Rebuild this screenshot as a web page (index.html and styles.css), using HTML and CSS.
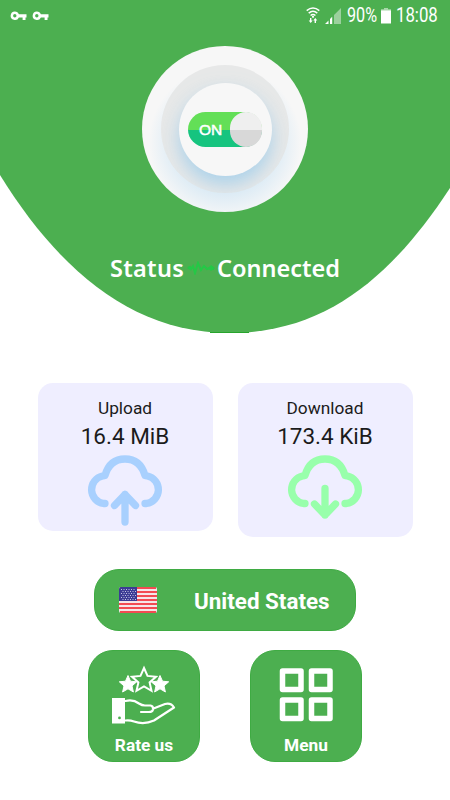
FILE: index.html
```html
<!DOCTYPE html>
<html lang="en">
<head>
<meta charset="UTF-8">
<meta name="viewport" content="width=device-width, initial-scale=1.0">
<title>VPN</title>
<link rel="stylesheet" href="styles.css">
</head>
<body>

<svg class="symbols" width="0" height="0">
  <symbol id="key" viewBox="0 0 16 10">
    <path fill="#fff" fill-rule="evenodd" d="M4.3 .4a4.3 4.3 0 0 1 4.1 2.9H16V6.400H15V9h-2.900V6.400H8.400A4.300 4.300 0 1 1 4.300 .4zM4.300 3a1.700 1.700 0 1 0 0 3.400a1.700 1.700 0 0 0 0-3.400z"/>
  </symbol>
  <symbol id="cloud" viewBox="0 0 76 72">
    <path d="M18 48.500H16.500A14 14 0 0 1 15.500 21Q17 20.500 18 20.500C21 10 28 4 38 4S55 10 58 20.500Q59 20.500 60.500 21A14 14 0 0 1 59.500 48.500H58"/>
  </symbol>
</svg>

<!-- Green top part -->
<div class="hero">
  <svg class="heroShape" viewBox="0 0 450 334" width="450" height="334">
    <path fill="#4caf50" d="M0 0H450V188C395 272 329 333 229.500 333C130 333 57 267 0 175Z"/>
    <path fill="#27a52c" d="M210 332h39v1h-39z"/>
  </svg>

  <div class="statusBar">
    <div class="keys">
      <svg width="17" height="10"><use href="#key"/></svg>
      <svg width="17" height="10"><use href="#key"/></svg>
    </div>
    <div class="system">
      <svg width="14" height="17" viewBox="0 0 14 17">
        <g fill="none" stroke="#fff" stroke-width="1.500">
          <path d="M.7 3.600Q7-1.700 13.300 3.600"/>
          <path d="M2.700 6.100Q7 2.500 11.300 6.100"/>
          <path d="M4.600 8.500Q7 6.500 9.400 8.500"/>
        </g>
        <circle cx="7" cy="9.800" r="1.100" fill="#fff"/>
        <path fill="#fff" d="M4 11h1.400v2.500h1.300L4.700 16L2.700 13.500H4zM8.600 16H10v-2.500h1.300L9.300 11L7.300 13.500h1.300z"/>
      </svg>
      <svg class="signal" width="16" height="16" viewBox="0 0 16 16">
        <path fill="#fff" d="M0 16l3.500-3.500V16zM5 16v-5l2.200-2.200V16z"/>
        <path fill="#9bd09d" d="M9 16V7l1-1V16zM10 16V6l6-6V16z"/>
      </svg>
      <span class="percent">90%</span>
      <svg class="battery" width="10" height="16" viewBox="0 0 10 16">
        <path fill="#a8d7aa" d="M3 0h4v1.300h3V3H0V1.300h3z"/>
        <path fill="#fff" d="M0 2.500h10V15.500H0z"/>
      </svg>
      <span class="time">18:08</span>
    </div>
  </div>

  <div class="power">
    <div class="ring">
      <div class="disc">
        <div class="switch">
          <span>ON</span>
          <div class="knob"></div>
        </div>
      </div>
    </div>
  </div>

  <div class="status">
    <span class="statusLabel">Status</span>
    <svg class="pulse" width="28" height="14" viewBox="0 0 28 14">
      <path fill="none" stroke="#24c846" stroke-width="2" d="M1 7l2-1l1 2l2-3l2 7l3-10l3 7l3-4l3 3l3-1l4 1"/>
      <path fill="#24c846" d="M0 7l3-2v4zM21 7l3-3l4 3l-4 3z"/>
    </svg>
    <span class="statusValue">Connected</span>
  </div>
</div>

<!-- Traffic cards -->
<div class="traffic">
  <div class="card upload">
    <div class="cardTitle">Upload</div>
    <div class="cardValue">16.4 MiB</div>
    <svg width="76" height="72" viewBox="0 0 76 72">
      <use href="#cloud"/>
      <path d="M38 67V39.500M27.500 50.500L38 39.500L48.500 50.500"/>
    </svg>
  </div>
  <div class="card download">
    <div class="cardTitle">Download</div>
    <div class="cardValue">173.4 KiB</div>
    <svg width="76" height="72" viewBox="0 0 76 72">
      <use href="#cloud"/>
      <path d="M38 33.500V60M27.500 49L38 60L48.500 49"/>
    </svg>
  </div>
</div>

<div class="country">
  <svg class="flag" width="38" height="26" viewBox="0 0 38 26">
    <rect width="38" height="26" rx="2" fill="#f5e6e8"/>
    <path stroke="#f34b52" stroke-width="2" d="M1 1H37M0 5H38M0 9H38M0 13H38M0 17H38M0 21H38M1 25H37"/>
    <path fill="#3b3b94" d="M2 0H18V14H0V2Q0 0 2 0z"/>
    <path stroke="#c3c3e2" stroke-width="1" stroke-dasharray="1 1.500" d="M2 2.500H17M3.500 4.500H17M2 6.500H17M3.500 8.500H17M2 10.500H17M3.500 12.500H17"/>
  </svg>
  <span>United States</span>
</div>

<!-- Bottom buttons -->
<div class="tiles">
  <div class="tile">
    <svg width="66" height="60" viewBox="0 0 66 60">
      <path fill="#fff" stroke="#fff" stroke-linejoin="round" d="M17 10.500l2.500 5.700l6.200.6l-4.700 4.100l1.400 6.100l-5.400-3.200l-5.400 3.200l1.400-6.100l-4.700-4.100l6.200-.6zM49 10.500l2.500 5.700l6.200.6l-4.700 4.100l1.400 6.100l-5.400-3.200l-5.400 3.200l1.400-6.100l-4.700-4.100l6.200-.6z"/>
      <path fill="#4caf50" stroke="#fff" stroke-width="2" stroke-linejoin="miter" d="M33 3l3.500 7.900l8.500.8l-6.400 5.700l1.900 8.400l-7.500-4.400l-7.500 4.400l1.900-8.400l-6.400-5.700l8.500-.8z"/>
      <path fill="#fff" fill-rule="evenodd" d="M1 33h13v25.500H1zM8.500 51.500a1.400 1.400 0 1 0 0 2.800a1.400 1.400 0 0 0 0-2.800z"/>
      <path fill="none" stroke="#fff" stroke-width="2.200" stroke-linecap="round" stroke-linejoin="round" d="M14.500 36Q22 34 28 38.500Q31 40.500 34 40.500H39.500Q42.500 41 42 44.500Q41.500 47 38 47H30M42.500 43.500L54 39Q60 37.500 63 42.500L43 55.500Q33 60 23 56.500Q19 55 14.500 55.500"/>
    </svg>
    <span>Rate us</span>
  </div>
  <div class="tile">
    <svg width="54" height="54" viewBox="0 0 54 54">
      <g fill="none" stroke="#fff" stroke-width="5.500" stroke-linejoin="round">
        <path d="M3.500 3h18.500v18.500H3.500zM32.500 3h18.500v18.500H32.500zM3.500 32h18.500v18.500H3.500zM32.500 32h18.500v18.500H32.500z"/>
      </g>
    </svg>
    <span>Menu</span>
  </div>
</div>

</body>
</html>
```
FILE: styles.css
```css
body {
  margin: 0;
  width: 450px;
  height: 800px;
  overflow: hidden;
  background-color: #fff;
  font-family: Roboto, sans-serif;
}
svg {
  display: block;
  flex: none;
}
.symbols {
  position: absolute;
}

/* Green curved header */
.hero {
  position: relative;
  height: 334px;
  display: flex;
  flex-direction: column;
  align-items: center;
}
.heroShape {
  position: absolute;
  top: 0;
  left: 0;
  z-index: -1;
}
.statusBar {
  width: 100%;
  height: 30px;
  box-sizing: border-box;
  padding: 1px 13px 0 10px;
  display: flex;
  justify-content: space-between;
  align-items: center;
  color: #fff;
}
.keys {
  display: flex;
  gap: 5px;
}
.system {
  display: flex;
  align-items: center;
  font-size: 19.5px;
  line-height: 30px;
}
.signal {
  margin-left: 5px;
}
.percent {
  width: 30px;
  margin-left: 6px;
}
.time {
  width: 41px;
  margin-left: 5px;
}
.percent, .time {
  display: inline-block;
  white-space: nowrap;
  transform-origin: left center;
}
.percent {
  transform: scaleX(0.83);
}
.time {
  transform: scaleX(0.86);
}
.battery {
  margin-left: 4px;
}

/* Round power button */
.power {
  width: 166px;
  height: 166px;
  margin-top: 16px;
  border-radius: 50%;
  background: radial-gradient(circle at 50% 58%, #dcebf5 40%, #f7f7f7 60%);
  display: flex;
  justify-content: center;
  align-items: center;
}
.ring {
  width: 128px;
  height: 128px;
  border-radius: 50%;
  background-color: #e7e8e8;
  display: flex;
  justify-content: center;
  align-items: center;
  overflow: hidden;
}
.disc {
  width: 93px;
  height: 93px;
  border-radius: 50%;
  background-color: #f7f7f7;
  box-shadow: 0 9px 18px rgba(140, 198, 235, 0.65);
  display: flex;
  justify-content: center;
  align-items: center;
}
.switch {
  width: 74px;
  height: 35px;
  border-radius: 18px;
  background: linear-gradient(#63df57 50%, #16c47f 50%);
  display: flex;
  justify-content: space-between;
  align-items: center;
}
.switch span {
  margin: 2px 0 0 11px;
  color: #fff;
  font-family: "Liberation Sans", sans-serif;
  font-size: 15.5px;
  -webkit-text-stroke: 0.5px #fff;
}
.knob {
  width: 32px;
  height: 35px;
  border-radius: 16px;
  background: linear-gradient(#efefef 50%, #d8d8d8 50%);
}

.status {
  width: 230px;
  height: 34px;
  margin-top: 39px;
  display: flex;
  align-items: center;
  color: #fff;
  font-family: "Noto Sans", sans-serif;
  font-size: 23.5px;
  font-weight: 600;
  line-height: 34px;
}
.statusLabel {
  width: 78px;
  letter-spacing: 0.3px;
}
.statusValue {
  margin-left: 2px;
}

/* Upload and download */
.traffic {
  margin-top: 49px;
  padding: 0 37.5px;
  display: flex;
  align-items: flex-start;
  justify-content: space-between;
}
.card {
  width: 175px;
  height: 148px;
  border-radius: 15px;
  background-color: #efeeff;
  color: #1b1b1b;
  display: flex;
  flex-direction: column;
  align-items: center;
}
.card svg {
  margin-top: 3px;
  fill: none;
  stroke-width: 7.3px;
  stroke-linecap: round;
  stroke-linejoin: round;
}
.upload svg {
  stroke: #a8d0fe;
}
.download {
  height: 154px;
}
.download svg {
  stroke: #98ffab;
}
.cardTitle {
  margin-top: 13px;
  font-size: 17.3px;
  line-height: 24px;
}
.cardValue {
  margin-top: 1px;
  font-size: 22.5px;
  line-height: 31px;
}

/* Selected country */
.country {
  width: 262px;
  height: 62px;
  box-sizing: border-box;
  margin: 32px auto 0;
  padding-left: 24px;
  border: 1px solid #3fab43;
  border-radius: 25px;
  background-color: #4caf50;
  color: #fff;
  font-size: 22.4px;
  font-weight: bold;
  display: flex;
  align-items: center;
}
.country span {
  margin: 2px 0 0 37px;
}

.tiles {
  margin-top: 19px;
  display: flex;
  justify-content: center;
  gap: 50px;
}
.tile {
  width: 112px;
  height: 112px;
  box-sizing: border-box;
  padding: 14px 0 6px;
  border: 1px solid #3fab43;
  border-radius: 25px;
  background-color: #4caf50;
  color: #fff;
  font-size: 17.3px;
  font-weight: bold;
  display: flex;
  flex-direction: column;
  align-items: center;
  justify-content: space-between;
}
.tile:last-child {
  padding-top: 17px;
}
```
